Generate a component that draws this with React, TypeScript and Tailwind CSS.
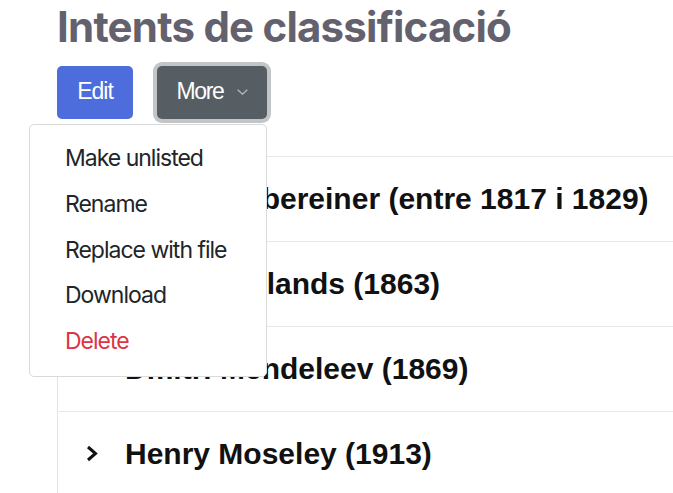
import React from "react";

const entries = [
  "Johan Döbereiner (entre 1817 i 1829)",
  "John Newlands (1863)",
  "Dmitri Mendeleev (1869)",
  "Henry Moseley (1913)",
];

const menuItems = ["Make unlisted", "Rename", "Replace with file", "Download"];

function Chevron() {
  return (
    <svg width="12" height="17" viewBox="0 0 12 17" className="shrink-0">
      <polyline points="2,2 9.5,8.5 2,15" fill="none" stroke="#111" strokeWidth="3" />
    </svg>
  );
}

export default function App() {
  return (
    <div className="min-h-screen bg-white overflow-hidden">
      <div className="pl-[57px] flex flex-col">
        {/* title */}
        <h1 className="mt-[6px] font-['Inter',sans-serif] font-bold text-[42px] leading-[42px] tracking-[-0.78px] text-[#64616e] whitespace-nowrap">
          Intents de classificació
        </h1>

        {/* actions */}
        <div className="mt-[18px] flex gap-[24px] font-['Liberation_Sans',Arial,sans-serif] text-[23px] text-white">
          <button className="w-[76px] h-[53px] rounded-[5px] bg-[#4e6ddc] flex items-center justify-center pb-[2px] tracking-[-1px]">
            Edit
          </button>
          <div className="relative">
            <button className="w-[110px] h-[53px] rounded-[5px] bg-[#565e64] shadow-[0_0_0_4px_#c3c6c9] flex items-center justify-center gap-[13px] pb-[2px]">
              <span className="tracking-[-1.3px]">More</span>
              <svg width="11" height="6" viewBox="0 0 11 6">
                <polyline points="0.7,0.7 5.5,5.2 10.3,0.7" fill="none" stroke="#b4b8bc" strokeWidth="1.3" />
              </svg>
            </button>

            {/* dropdown */}
            <div className="absolute right-0 top-[58px] z-10 w-[238px] h-[253px] bg-white border border-[#dadada] rounded-[5px] pt-[11px] font-['Inter',sans-serif] text-[23px] tracking-[-1px]">
              {menuItems.map(item => (
                <div key={item} className="h-[45.75px] leading-[45.75px] pl-[35px] text-[#212529] whitespace-nowrap">
                  {item}
                </div>
              ))}
              <div className="h-[45.75px] leading-[45.75px] pl-[35px] text-[#dc3545]">Delete</div>
            </div>
          </div>
        </div>

        {/* list */}
        <div className="mt-[37px] border-l border-[#e4e4e4]">
          {entries.map(e => (
            <div key={e} className="h-[85px] border-t border-[#e8e8e8] flex items-center pl-[28px] gap-[27px] pb-[2px]">
              <Chevron />
              <span className="font-['Liberation_Sans',Arial,sans-serif] font-bold text-[30px] text-[#111] whitespace-nowrap">
                {e}
              </span>
            </div>
          ))}
        </div>
      </div>
    </div>
  );
}
